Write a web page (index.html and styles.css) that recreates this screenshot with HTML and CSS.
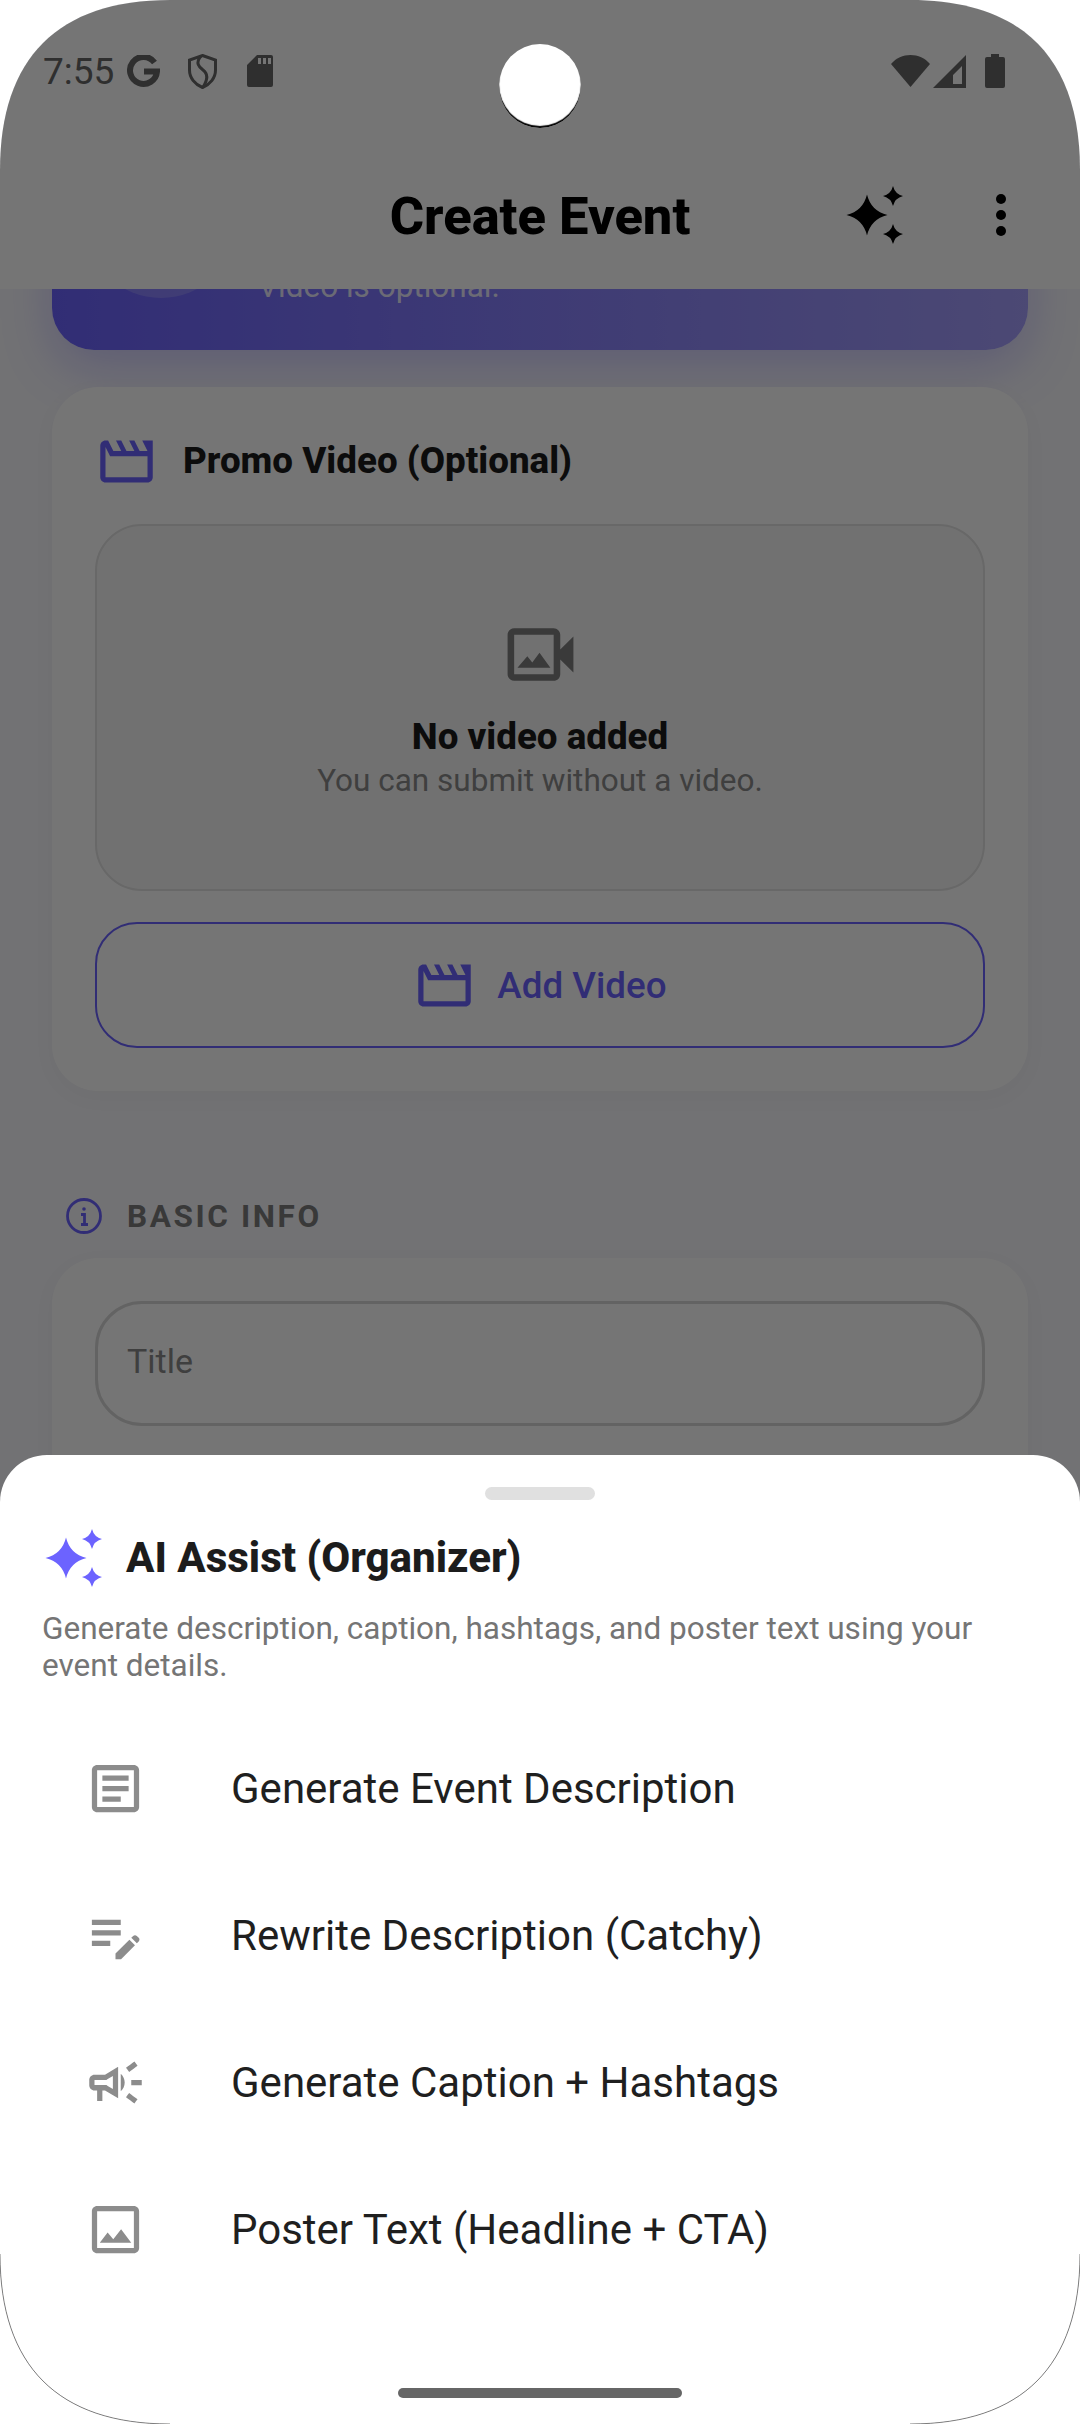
FILE: index.html
```html
<!DOCTYPE html>
<html lang="en">

<head>
    <meta charset="UTF-8">
    <meta name="viewport" content="width=device-width, initial-scale=1.0">
    <title>Create Event</title>
    <link rel="stylesheet" href="styles.css">
</head>

<body>
    <svg class="defs" width="0" height="0">
        <symbol id="sparkles" viewBox="0 0 60 60">
            <path d="M22 9.5Q26 26 42.5 30Q26 34 22 50.5Q18 34 1.5 30Q18 26 22 9.5Z" />
            <path d="M48 1Q50 9 58 11Q50 13 48 21Q46 13 38 11Q46 9 48 1Z" />
            <path d="M48 39Q50 47 58 49Q50 51 48 59Q46 51 38 49Q46 47 48 39Z" />
        </symbol>
        <symbol id="movie" viewBox="0 0 24 24">
            <path d="M4 6.47L5.76 10H20v8H4V6.47M22 4h-4l2 4h-3l-2-4h-2l2 4h-3l-2-4H8l2 4H7L5 4H4c-1.1 0-1.99.9-1.99 2L2 18c0 1.1.9 2 2 2h16c1.1 0 2-.9 2-2V4z" />
        </symbol>
    </svg>

    <div class="screen">
        <header class="appbar">
            <div class="status">
                <div class="status-left">
                    <span class="time">7:55</span>
                    <svg class="ic-g" viewBox="0 0 33 33">
                        <path d="M27.5 7.5A13.5 13.5 0 1 0 30 16.5H17" />
                    </svg>
                    <svg class="ic-shield" viewBox="0 0 29 35">
                        <path d="M14.5 1.5L27.5 6V16C27.5 24 22 30.500 14.500 33.500C7 30.500 1.500 24 1.500 16V6Z" />
                        <path d="M13 2C7 9 11 13 15 16C19 19 21 24 15 33" />
                    </svg>
                    <svg class="ic-sd" viewBox="0 0 26 32">
                        <path fill-rule="evenodd" d="M10 0H24a2 2 0 0 1 2 2V30a2 2 0 0 1-2 2H2a2 2 0 0 1-2-2V10ZM11 3V9H14V3ZM16 3V9H19V3ZM21 3V9H24V3Z" />
                    </svg>
                </div>
                <div class="status-right">
                    <svg class="ic-wifi" viewBox="0 0 39 32">
                        <path d="M0 9C5 3 12 0 19.500 0C27 0 34 3 39 9L19.500 32Z" />
                    </svg>
                    <svg class="ic-signal" viewBox="0 0 33 33">
                        <path fill-rule="evenodd" d="M33 0V33H0ZM29 11L20 20V29H29Z" />
                    </svg>
                    <svg class="ic-battery" viewBox="0 0 20 34">
                        <path d="M6 0H14V3H18a2 2 0 0 1 2 2V32a2 2 0 0 1-2 2H2a2 2 0 0 1-2-2V5a2 2 0 0 1 2-2H6Z" />
                    </svg>
                </div>
            </div>
            <div class="toolbar">
                <span></span>
                <h1 class="page-title">Create Event</h1>
                <div class="actions">
                    <svg class="ic-sparkles"><use href="#sparkles" /></svg>
                    <svg class="ic-more" viewBox="0 0 10 42">
                        <circle cx="5" cy="5" r="5" />
                        <circle cx="5" cy="21" r="5" />
                        <circle cx="5" cy="37" r="5" />
                    </svg>
                </div>
            </div>
        </header>

        <main class="content">
            <section class="hero">
                <div class="hero-badge"></div>
                <p class="hero-note">Video is optional.</p>
            </section>

            <section class="card">
                <div class="card-head">
                    <svg class="ic-movie"><use href="#movie" /></svg>
                    <h2>Promo Video (Optional)</h2>
                </div>
                <div class="dropzone">
                    <svg class="ic-video" viewBox="0 0 24 24">
                        <path fill-rule="evenodd" d="M18 10.48V6c0-1.1-.9-2-2-2H4c-1.1 0-2 .9-2 2v12c0 1.1.9 2 2 2h12c1.100 0 2-.9 2-2v-4.480l4 3.980v-11l-4 3.980zM16 18H4V6h12v12z" />
                        <path d="M5 16h10l-3.300-4.500-2.200 2.900L8 12.500z" />
                    </svg>
                    <strong>No video added</strong>
                    <span>You can submit without a video.</span>
                </div>
                <button class="add-btn">
                    <svg class="ic-movie"><use href="#movie" /></svg>
                    Add Video
                </button>
            </section>

            <div class="section-label">
                <svg class="ic-info" viewBox="0 0 36 36">
                    <circle cx="18" cy="18" r="16.500" />
                    <path d="M15 16.500H18.500V26M15 26.500H22" />
                    <circle class="dot" cx="18" cy="11" r="1.800" />
                </svg>
                <span>BASIC INFO</span>
            </div>

            <section class="card card-fields">
                <div class="field">Title</div>
            </section>
        </main>

        <div class="scrim"></div>

        <aside class="sheet">
            <div class="handle"></div>
            <div class="sheet-head">
                <svg class="ic-sparkles"><use href="#sparkles" /></svg>
                <h2>AI Assist (Organizer)</h2>
            </div>
            <p class="sheet-desc">Generate description, caption, hashtags, and poster text using your event details.</p>
            <ul class="menu">
                <li>
                    <svg viewBox="0 0 24 24">
                        <path d="M19 5v14H5V5h14m0-2H5c-1.100 0-2 .9-2 2v14c0 1.100.9 2 2 2h14c1.100 0 2-.9 2-2V5c0-1.100-.9-2-2-2z" />
                        <path d="M14 17H7v-2h7v2zm3-4H7v-2h10v2zm0-4H7V7h10v2z" />
                    </svg>
                    Generate Event Description
                </li>
                <li>
                    <svg viewBox="0 0 24 24">
                        <path d="M3 10h11v2H3zm0-2h11V6H3zm0 8h7v-2H3zm15.010-3.130.71-.71c.39-.39 1.020-.39 1.410 0l.71.71c.39.39.39 1.020 0 1.410l-.71.71-2.120-2.120zm-.71.71-5.300 5.300V21h2.120l5.300-5.300-2.120-2.120z" />
                    </svg>
                    Rewrite Description (Catchy)
                </li>
                <li>
                    <svg viewBox="0 0 24 24">
                        <path d="M18 11v2h4v-2h-4zm-2 6.610c.96.71 2.210 1.650 3.200 2.390.4-.53.8-1.070 1.200-1.600-.99-.74-2.240-1.680-3.200-2.400-.4.54-.8 1.080-1.200 1.610zM20.400 5.600c-.4-.53-.8-1.070-1.200-1.600-.99.74-2.240 1.680-3.200 2.400.4.53.8 1.070 1.200 1.600.96-.72 2.210-1.650 3.200-2.400zM4 9c-1.100 0-2 .9-2 2v2c0 1.100.9 2 2 2h1v4h2v-4h1l5 3V6L8 9H4zm5.030 1.710L11 9.530v4.940l-1.970-1.180-.48-.29H4v-2h4.550l.48-.29zM15.500 12c0-1.330-.58-2.530-1.500-3.350v6.690c.92-.81 1.500-2.010 1.500-3.340z" />
                    </svg>
                    Generate Caption + Hashtags
                </li>
                <li>
                    <svg viewBox="0 0 24 24">
                        <path d="M19 5v14H5V5h14m0-2H5c-1.100 0-2 .9-2 2v14c0 1.100.9 2 2 2h14c1.100 0 2-.9 2-2V5c0-1.100-.9-2-2-2zm-4.860 8.860l-3 3.870L9 13.140 6 17h12l-3.860-5.140z" />
                    </svg>
                    Poster Text (Headline + CTA)
                </li>
            </ul>
            <div class="home-bar"></div>
        </aside>

        <div class="camera"></div>
    </div>

    <!-- hairline where the display edge shows through at the bottom corners -->
    <svg class="edge" viewBox="0 0 1080 2424">
        <path d="M0 2254C0 2366 58 2424 170 2424M1080 2254C1080 2366 1022 2424 910 2424" />
    </svg>
</body>

</html>
```

FILE: styles.css
```css
/* Phone frame */
* {
    box-sizing: border-box;
}

body {
    position: relative;
    width: 1080px;
    height: 2424px;
    margin: 0;
    overflow: hidden;
    background: #fff;
    font-family: Roboto, sans-serif;
}

.defs {
    position: absolute;
}

svg {
    display: block;
    fill: currentColor;
}

.screen {
    position: relative;
    display: flex;
    flex-direction: column;
    width: 1080px;
    height: 2424px;
    overflow: hidden;
    clip-path: path("M0 170C0 58 58 0 170 0H910C1022 0 1080 58 1080 170V2254C1080 2366 1022 2424 910 2424H170C58 2424 0 2366 0 2254Z");
    background: #f8f8fc;
}

.edge {
    position: absolute;
    inset: 0;
    width: 1080px;
    height: 2424px;
    fill: none;
    stroke: #555;
    stroke-width: 0.7;
}

/* App bar and status bar */
.appbar {
    position: relative;
    z-index: 1;
    flex: none;
    height: 289px;
    background: #fff;
    color: #000;
}

.status {
    display: flex;
    justify-content: space-between;
    align-items: center;
    height: 142px;
    padding: 0 75px 0 43px;
    color: #666;
}

.status-left,
.status-right {
    display: flex;
    align-items: center;
}

.time {
    font-size: 37px;
    line-height: 1;
}

.ic-g {
    width: 33px;
    height: 33px;
    margin-left: 13px;
    fill: none;
    stroke: currentColor;
    stroke-width: 6;
}

.ic-shield {
    width: 29px;
    height: 35px;
    margin-left: 28px;
    fill: none;
    stroke: currentColor;
    stroke-width: 3;
}

.ic-sd {
    width: 26px;
    height: 32px;
    margin-left: 30px;
}

.ic-wifi {
    width: 39px;
    height: 32px;
}

.ic-signal {
    width: 33px;
    height: 33px;
    margin-left: 3px;
}

.ic-battery {
    width: 20px;
    height: 34px;
    margin-left: 19px;
}

.toolbar {
    display: grid;
    grid-template-columns: 1fr auto 1fr;
    align-items: center;
    height: 150px;
    margin-top: -2px;
}

.page-title {
    margin: 2px 0 0;
    font-size: 52.5px;
    font-weight: 800;
    line-height: 1.2;
}

.actions {
    display: flex;
    align-items: center;
    justify-content: flex-end;
    gap: 91px;
    padding-right: 74px;
}

.ic-sparkles {
    width: 60px;
    height: 60px;
}

.ic-more {
    width: 10px;
    height: 42px;
}

/* Scrolled content behind the sheet */
.content {
    flex: 1;
    min-height: 0;
    padding: 0 52px;
}

.hero {
    display: flex;
    align-items: flex-start;
    gap: 21px;
    height: 204px;
    margin-top: -143px;
    padding-left: 33px;
    overflow: hidden;
    border-radius: 42px;
    background: linear-gradient(90deg, #6c63ff, #a59ffc);
    box-shadow: 0 18px 50px rgba(108, 99, 255, 0.3);
}

.hero-badge {
    flex: none;
    width: 152px;
    height: 152px;
    border-radius: 50%;
    background: rgba(255, 255, 255, 0.18);
}

.hero-note {
    margin: 0;
    padding-top: 119px;
    font-size: 31.5px;
    line-height: 44px;
    color: rgba(255, 255, 255, 0.85);
}

.card {
    margin-top: 37px;
    padding: 43px;
    border-radius: 46px;
    background: #fff;
    box-shadow: 0 6px 24px rgba(0, 0, 0, 0.03);
}

.card-head {
    display: flex;
    align-items: center;
    gap: 25px;
    height: 63px;
    margin-bottom: 31px;
    color: #6c63ff;
}

.card-head h2 {
    margin: -3px 0 0;
    font-size: 36.75px;
    font-weight: 800;
    color: #1c1c1c;
}

.ic-movie {
    flex: none;
    width: 63px;
    height: 63px;
}

.dropzone {
    display: flex;
    flex-direction: column;
    align-items: center;
    justify-content: center;
    height: 367px;
    border: 2.5px solid #e2e2e2;
    border-radius: 47px;
    background: #f7f7f7;
}

.ic-video {
    width: 79px;
    height: 79px;
    margin-top: 2px;
    color: #7e7e7e;
}

.dropzone strong {
    margin-top: 21px;
    font-size: 36.75px;
    font-weight: 800;
    line-height: 44px;
    color: #1c1c1c;
}

.dropzone span {
    font-size: 31.5px;
    line-height: 44px;
    color: #8a8a8a;
}

.add-btn {
    display: flex;
    align-items: center;
    justify-content: center;
    gap: 21px;
    width: 100%;
    height: 126px;
    margin-top: 31px;
    border: 2.6px solid #6c63ff;
    border-radius: 42px;
    background: none;
    color: #6c63ff;
    font-family: inherit;
    font-size: 36.75px;
    font-weight: 500;
}

.section-label {
    display: flex;
    align-items: center;
    gap: 25px;
    height: 40px;
    margin: 105px 0 0 14px;
    color: #6c63ff;
}

.ic-info {
    width: 36px;
    height: 36px;
    fill: none;
    stroke: currentColor;
    stroke-width: 2.8;
}

.ic-info .dot {
    fill: currentColor;
    stroke: none;
}

.section-label span {
    font-size: 31.5px;
    font-weight: 700;
    letter-spacing: 2.6px;
    color: #7c7c7c;
}

.card-fields {
    height: 400px;
    margin-top: 22px;
}

.field {
    display: flex;
    align-items: center;
    height: 125px;
    padding: 0 0 5px 29px;
    border: 3px solid #d8d8d8;
    border-radius: 47px;
    font-size: 34px;
    color: #8a8a8a;
}

/* Dim layer and bottom sheet */
.scrim {
    position: absolute;
    z-index: 2;
    inset: 0;
    background: rgba(0, 0, 0, 0.54);
}

.sheet {
    position: absolute;
    z-index: 3;
    left: 0;
    right: 0;
    bottom: 0;
    height: 969px;
    padding: 32px 0 0;
    border-radius: 47px 47px 0 0;
    background: #fff;
}

.handle {
    width: 110px;
    height: 13px;
    margin: 0 auto;
    border-radius: 7px;
    background: #e0e0e0;
}

.sheet-head {
    display: flex;
    align-items: center;
    gap: 22px;
    height: 60px;
    margin: 28px 0 0 44px;
    color: #6c63ff;
}

.sheet-head h2 {
    margin: -1px 0 0;
    font-size: 42px;
    font-weight: 800;
    color: #1c1c1c;
}

.sheet-desc {
    width: 980px;
    margin: 22px 0 0 42px;
    font-size: 31.5px;
    line-height: 37px;
    color: #757575;
}

.menu {
    margin: 31px 0 0;
    padding: 0;
    list-style: none;
}

.menu li {
    display: flex;
    align-items: center;
    gap: 84px;
    height: 147px;
    padding-left: 84px;
    font-size: 42px;
    color: #1f1f1f;
}

.menu svg {
    flex: none;
    width: 63px;
    height: 63px;
    color: #8c8c8c;
}

.home-bar {
    position: absolute;
    left: 398px;
    bottom: 26px;
    width: 284px;
    height: 10px;
    border-radius: 5px;
    background: #666;
}

.camera {
    position: absolute;
    z-index: 4;
    top: 44px;
    left: 499px;
    width: 82px;
    height: 84px;
    border-radius: 50%;
    background: #fff;
    box-shadow: inset 0 -2px 1px #000;
}
```
